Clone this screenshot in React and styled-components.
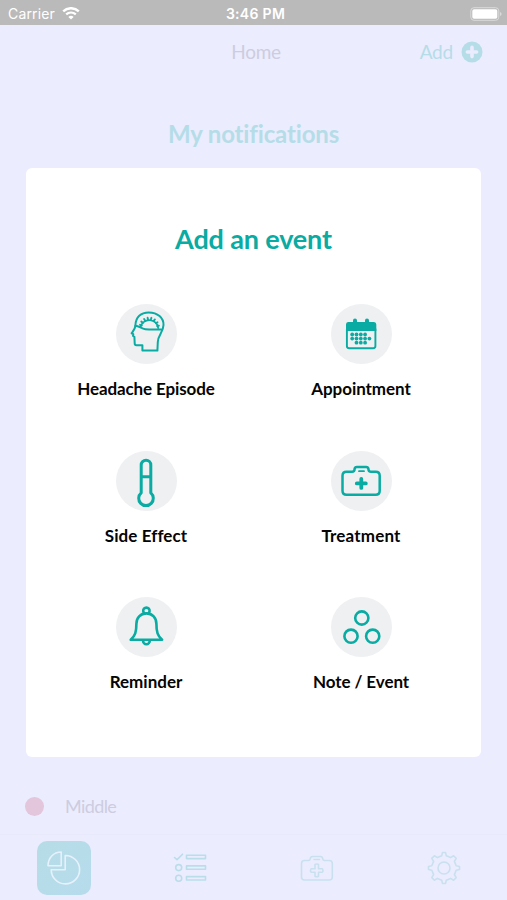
import React from "react"
import styled, { createGlobalStyle } from "styled-components"

const colors = {
  teal: "#0aaba2",
  fadedTeal: "#b5dde8",
  fadedGrey: "#cdcce0",
  backdrop: "#ebecfe",
  disc: "#eef0f2",
}

const GlobalStyle = createGlobalStyle`
  * {
    box-sizing: border-box;
  }
  body {
    margin: 0;
    background: ${colors.backdrop};
    font-family: Lato, "Open Sans", sans-serif;
  }
`

const Screen = styled.div`
  display: flex;
  flex-direction: column;
  width: 507px;
  height: 900px;
  overflow: hidden;
  background: ${colors.backdrop};
`
const StatusBar = styled.div`
  display: grid;
  grid-template-columns: 1fr auto 1fr;
  align-items: center;
  flex: none;
  height: 25px;
  padding: 2px 5px 0 8px;
  background: #bababa;
  color: #fff;
  font: 400 14px/20px Inter, sans-serif;
`
const Carrier = styled.div`
  display: flex;
  align-items: center;
  gap: 7px;
  letter-spacing: 0.15px;
`
const Clock = styled.div`
  font-weight: 600;
  letter-spacing: 0.3px;
  padding-left: 1px;
`
const Battery = styled.svg`
  justify-self: end;
`
const NavBar = styled.header`
  display: grid;
  grid-template-columns: 1fr auto 1fr;
  align-items: center;
  flex: none;
  height: 54px;
  padding: 0 24px;
`
const NavTitle = styled.div`
  grid-column: 2;
  padding: 0 0 2px 5px;
  font-size: 19px;
  letter-spacing: -0.3px;
  color: ${colors.fadedGrey};
`
const AddButton = styled.div`
  display: flex;
  align-items: center;
  justify-self: end;
  gap: 8px;
  font-size: 19px;
  letter-spacing: -0.2px;
  color: ${colors.fadedTeal};
  span {
    padding-bottom: 2px;
  }
`
const PageTitle = styled.h2`
  flex: none;
  margin: 38px 0 17px;
  font-size: 24px;
  line-height: 34px;
  letter-spacing: -0.15px;
  text-align: center;
  color: ${colors.fadedTeal};
`
const Modal = styled.section`
  flex: none;
  width: 455px;
  height: 589px;
  margin: 0 auto;
  padding: 54px 12.5px 0;
  border-radius: 6px;
  background: #fff;
`
const ModalTitle = styled.h1`
  margin: 0 0 48px;
  font-size: 27px;
  line-height: 34px;
  letter-spacing: -0.15px;
  text-align: center;
  color: ${colors.teal};
`
const EventGrid = styled.div`
  display: grid;
  grid-template-columns: 1fr 1fr;
  grid-auto-rows: 146.6px;
`
const Event = styled.div`
  display: flex;
  flex-direction: column;
  align-items: center;
  gap: 13px;
`
const Disc = styled.div`
  width: 61px;
  height: 60px;
  border-radius: 50%;
  background: ${colors.disc};
  svg {
    display: block;
    fill: none;
    stroke: ${colors.teal};
    stroke-width: 2.6;
    stroke-linecap: round;
    stroke-linejoin: round;
  }
`
const EventName = styled.div`
  font-size: 17px;
  font-weight: 700;
  line-height: 24px;
  letter-spacing: ${p => p.$spacing}px;
  white-space: nowrap;
  color: #050505;
`
const LegendRow = styled.div`
  display: flex;
  align-items: center;
  flex: none;
  gap: 21px;
  height: 77px;
  padding: 22px 25px 0;
  font-size: 18px;
  letter-spacing: -0.6px;
  color: ${colors.fadedGrey};
  span:last-child {
    padding-bottom: 2px;
  }
`
const Dot = styled.span`
  width: 19px;
  height: 19px;
  border-radius: 50%;
  background: #e3c5dc;
`
const TabBar = styled.nav`
  display: grid;
  grid-template-columns: repeat(4, 1fr);
  flex: 1;
  border-top: 1px solid #e8e9fa;
`
const Tab = styled.div`
  display: flex;
  align-items: center;
  justify-content: center;
  padding-left: ${p => (p.$active ? 2 : 0)}px;
  svg {
    fill: none;
    stroke: ${p => (p.$active ? "#e7f1fc" : p.$strong ? "#b9deea" : "#c9e1ef")};
    stroke-width: 1.6;
    stroke-linecap: round;
    stroke-linejoin: round;
  }
`
const TabTile = styled.div`
  display: flex;
  align-items: center;
  justify-content: center;
  width: 54px;
  height: 54px;
  border-radius: 10px;
  background: linear-gradient(135deg, #b5dde6, #b7dbec);
`

const Wifi = () => (
  <svg width="18" height="13" viewBox="0 0 18 13" fill="none" stroke="#fff">
    <path d="M1.2 4.3a11.3 11.3 0 0 1 15.6 0" strokeWidth="2.4" />
    <path d="M4.2 7.4a7 7 0 0 1 9.6 0" strokeWidth="2.2" />
    <path d="M9 12.6 6.4 10a3.8 3.8 0 0 1 5.2 0z" fill="#fff" stroke="none" />
  </svg>
)

const HeadIcon = () => (
  <>
    <path
      strokeWidth="2"
      d="M19.4 21.5C19.6 13 25 8.4 32.7 8.4c9 0 15 5.6 14.8 12.6-.2 7.5-5.7 10.5-5.7 17l-.4 8.6H26.4v-5.4h-6q-1.7 0-1.7-1.7l-.3-6.7-1.4-.8.3-1.8-1.7-.9c1.800-2.600 3.700-4.600 3.800-7.800z"
    />
    <path strokeWidth="2" d="M19.4 21.7c4 .4 6 3.100 10 3.500 5 .4 10 .2 16 .2" />
    <path strokeWidth="1.700" d="M24.600 22.800a8.900 8.300 0 0 1 17.600 1.300" />
    <path
      strokeWidth="1.900"
      d="M24 20.800 25.800 21.400M25.300 17.600 27 18.800M28.100 15 29.200 16.700M31.600 13.700 32 15.500M35.400 13.800 34.900 15.600M38.900 15.400 37.700 16.900M41.500 18.200 39.900 19.200M42.900 21.600 41.200 22"
    />
  </>
)

const CalendarIcon = () => (
  <>
    <path
      fill="#0aaba2"
      stroke="none"
      d="M17 18h5v-1.500a2 2 0 0 1 4 0V18h8v-1.500a2 2 0 0 1 4 0V18h5q2.300 0 2.300 2.500v6.500H15v-6.500Q15 18 17 18z"
    />
    <path strokeWidth="1.900" d="M15.900 25v17q0 2.200 2.200 2.200h24q2.300 0 2.300-2.200V25" />
    {[
      [30.5, [21.2, 25.5, 29.8, 34.1]],
      [34.6, [21.2, 25.5, 29.8, 34.1, 38.4]],
      [38.7, [25.5, 29.8, 34.1]],
    ].map(([y, xs]) =>
      xs.map(x => (
        <circle key={`${x}-${y}`} cx={x} cy={y} r="1.9" fill="#0aaba2" stroke="none" />
      ))
    )}
  </>
)

const ThermometerIcon = () => (
  <path
    strokeWidth="3"
    d="M25.2 41.800V14a4.800 4.800 0 0 1 9.600 0v27.800a7.300 7.300 0 1 1-9.600 0zM25.200 25.700h9.600"
  />
)

const KitIcon = () => (
  <>
    <path
      strokeWidth="2.5"
      d="M15.500 20.800H21q2.500 0 2.500-2.200 0-2.700 2.500-2.700h9q2.500 0 2.500 2.700 0 2.200 2.500 2.200h4.700q4 0 4 4v15q0 4-4 4H15.500q-4 0-4-4v-15q0-4 4-4z"
    />
    <path strokeWidth="1.800" d="M28 20.200h5" />
    <path strokeWidth="3.800" d="M30.300 27.900v9M25.800 32.400h9" />
  </>
)

const BellIcon = () => (
  <>
    <path d="M28.700 16.500a3.200 3.200 0 1 1 3.400 0" />
    <path d="M30.400 16.400c-6 0-10 4.600-10 10.400 0 8.200-1.200 12-5.700 16h31.400c-4.500-4-5.700-7.800-5.700-16 0-5.800-4-10.400-10-10.400z" />
    <path d="M27 43.500a3.400 3.800 0 0 0 6.800 0" />
  </>
)

const NoteIcon = () => (
  <>
    <circle cx="30.8" cy="21" r="6.6" />
    <circle cx="20" cy="39.2" r="6.6" />
    <circle cx="41.7" cy="39.2" r="6.6" />
  </>
)

const events = [
  { name: "Headache Episode", icon: <HeadIcon />, spacing: -0.13 },
  { name: "Appointment", icon: <CalendarIcon />, spacing: -0.05 },
  { name: "Side Effect", icon: <ThermometerIcon />, spacing: 0.08 },
  { name: "Treatment", icon: <KitIcon />, spacing: 0.18 },
  { name: "Reminder", icon: <BellIcon />, spacing: 0 },
  { name: "Note / Event", icon: <NoteIcon />, spacing: -0.08 },
]

const App = () => (
  <>
    <GlobalStyle />
    <Screen>
      <StatusBar>
        <Carrier>
          <span>Carrier</span>
          <Wifi />
        </Carrier>
        <Clock>3:46 PM</Clock>
        <Battery width="32" height="14" viewBox="0 0 32 14">
          <rect x="0.8" y="0.7" width="28" height="12.6" rx="3.2" fill="none" stroke="#dadada" />
          <rect x="2.3" y="2.2" width="25" height="9.6" rx="1.8" fill="#fff" />
          <path d="M30 5v4q1.6-.6 1.6-2T30 5z" fill="#dadada" />
        </Battery>
      </StatusBar>
      <NavBar>
        <NavTitle>Home</NavTitle>
        <AddButton>
          <span>Add</span>
          <svg width="22" height="22" viewBox="0 0 22 22">
            <circle cx="11" cy="11" r="10.5" fill={colors.fadedTeal} />
            <path
              d="M11 6.400v9.200M6.400 11h9.200"
              stroke={colors.backdrop}
              strokeWidth="3.6"
              strokeLinecap="round"
            />
          </svg>
        </AddButton>
      </NavBar>
      <PageTitle>My notifications</PageTitle>
      <Modal>
        <ModalTitle>Add an event</ModalTitle>
        <EventGrid>
          {events.map(({ name, icon, spacing }) => (
            <Event key={name}>
              <Disc>
                <svg width="60" height="60" viewBox="0 0 60 60">
                  {icon}
                </svg>
              </Disc>
              <EventName $spacing={spacing}>{name}</EventName>
            </Event>
          ))}
        </EventGrid>
      </Modal>
      <LegendRow>
        <Dot />
        <span>Middle</span>
      </LegendRow>
      <TabBar>
        <Tab $active>
          <TabTile>
            <svg width="34" height="34" viewBox="0 0 34 34">
              <path d="M18.200 4.500A14.200 14.200 0 1 1 4.200 18.700h14z" />
              <path d="M14.200 1v13.800H1C1 7 6.500 1 14.200 1z" />
            </svg>
          </TabTile>
        </Tab>
        <Tab $strong>
          <svg width="34" height="30" viewBox="0 0 34 30">
            <path d="M1.500 4.500 4 6.700 9.500 1.200M13.500 2.200h19v3.400h-19zM13.500 12.900h19v3.400h-19zM13.500 23.600h19v3.400h-19z" />
            <circle cx="5.700" cy="14.600" r="3" />
            <circle cx="5.700" cy="25.200" r="3" />
          </svg>
        </Tab>
        <Tab>
          <svg width="34" height="28" viewBox="0 0 34 28">
            <path d="M4.500 6.500h4q1.500 0 1.700-1.500.3-2.500 2.300-2.500h8q2 0 2.300 2.500.2 1.500 1.700 1.500h4.800q3 0 3 3V23q0 3-3 3H4.500q-3 0-3-3V9.500q0-3 3-3zM14 5.500h5.500" />
            <path d="M15 10.500q1.800-1 3.500 0v4.300h4q1 1.700 0 3.400h-4v4q-1.700 1-3.500 0v-4h-4q-1-1.700 0-3.400h4z" />
          </svg>
        </Tab>
        <Tab>
          <svg width="34" height="34" viewBox="0 0 34 34">
            <path d="M14.700 4.800 15.500 1.500h3l.8 3.300 4.300 1.800 3-1.800 2.600 2.600-1.800 3 1.800 4.300 3.300.8v3l-3.300.8-1.800 4.300 1.800 3-2.600 2.600-3-1.800-4.300 1.800-.8 3.300h-3l-.8-3.300-4.300-1.800-3 1.800-2.600-2.600 1.800-3-1.800-4.300-3.300-.8v-3l3.300-.8 1.800-4.300-1.800-3 2.600-2.600 3 1.800z" />
            <circle cx="17" cy="17" r="6" />
          </svg>
        </Tab>
      </TabBar>
    </Screen>
  </>
)

export default App
